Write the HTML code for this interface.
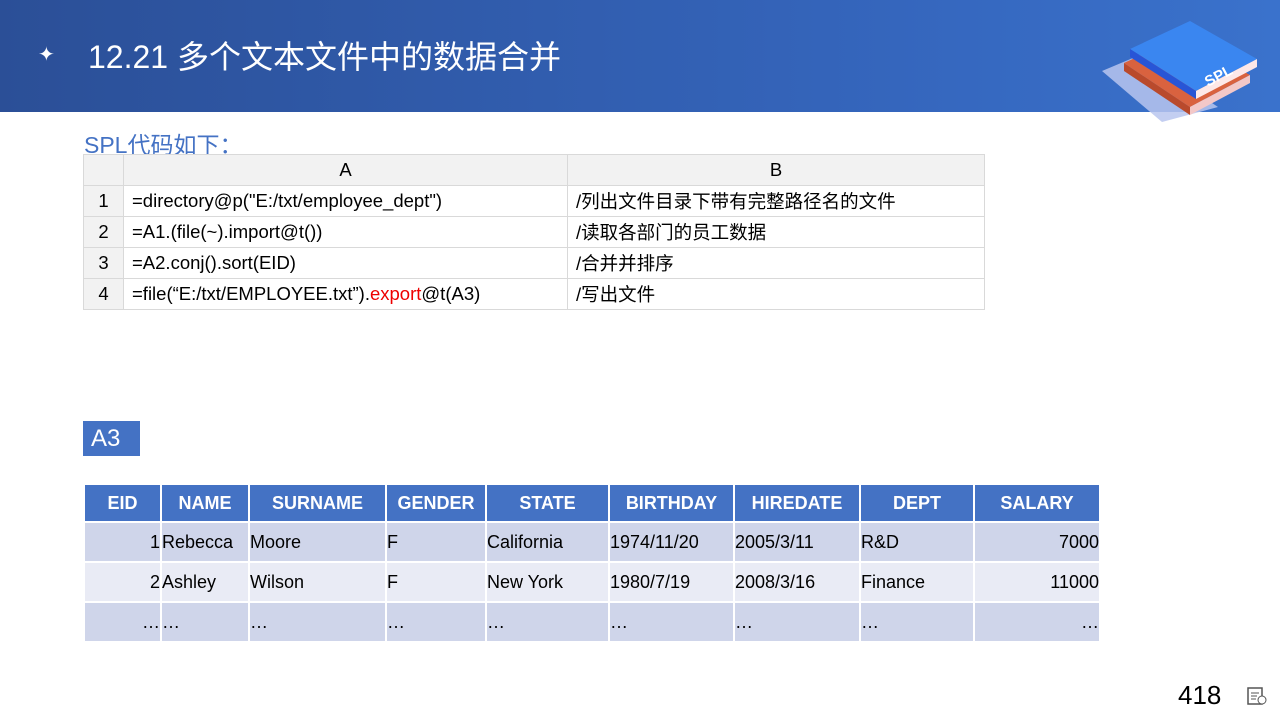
<!DOCTYPE html><html><head><meta charset="utf-8"><style>
body{margin:0;width:1280px;height:720px;position:relative;overflow:hidden;background:#fff;font-family:"Liberation Sans","Noto Sans CJK SC",sans-serif}
.hdr{position:absolute;left:0;top:0;width:1280px;height:112px;background:linear-gradient(90deg,#2b4f97,#3566bd 70%,#3a72cc)}
.title{position:absolute;left:88px;top:32px;color:#fff;font-size:32px}
.star{position:absolute;left:38px;top:42px;color:#fff;font-size:20px}
table{border-collapse:collapse;position:absolute}
.code{table-layout:fixed}
.code td{border:1px solid #d9d9d9;font-size:18.5px;height:30px;padding:0 0 0 8px;color:#000;white-space:nowrap}
.code tr:first-child td{background:#f2f2f2;text-align:center;padding:0}
.code td.n{background:#f2f2f2;text-align:center;padding:0}
.res{border-collapse:separate;border-spacing:2px}
.res td{height:38px;font-size:18px;padding:0;white-space:nowrap}
.res th{background:#4472c4;color:#fff;font-size:18px;height:36px;font-weight:bold;padding:0}
.o td{background:#cfd5ea}.e td{background:#e9ebf5}
.r{text-align:right}
</style></head><body>
<div class="hdr"></div>
<div class="star">✦</div>
<div class="title">12.21 多个文本文件中的数据合并</div>
<svg style="position:absolute;left:1100px;top:15px" width="160" height="110" viewBox="0 0 160 110">
<polygon points="2,56 40,40 118,92 62,107" fill="#b9c6ee" opacity="0.85"/>
<polygon points="24,48 80,22 150,60 90,92" fill="#d9623f"/>
<polygon points="24,48 24,56 90,100 90,92" fill="#b94a2c"/>
<polygon points="90,92 150,60 150,68 90,100" fill="#f3c8c8"/>
<polygon points="30,34 90,6 157,44 96,76" fill="#3a86f0"/>
<polygon points="30,34 30,42 96,84 96,76" fill="#2855d6"/>
<polygon points="96,76 157,44 157,52 96,84" fill="#fde8e8"/>
<text x="108" y="72" fill="#fff" font-size="15" font-weight="bold" transform="rotate(-28 108 72)">SPL</text>
</svg>
<div style="position:absolute;left:84px;top:126px;color:#4472c4;font-size:23px">SPL代码如下：</div>
<table class="code" style="left:83px;top:154px;width:901px">
<colgroup><col style="width:40px"><col style="width:444px"><col style="width:417px"></colgroup>
<tr><td></td><td>A</td><td>B</td></tr>
<tr><td class="n">1</td><td>=directory@p("E:/txt/employee_dept")</td><td>/列出文件目录下带有完整路径名的文件</td></tr>
<tr><td class="n">2</td><td>=A1.(file(~).import@t())</td><td>/读取各部门的员工数据</td></tr>
<tr><td class="n">3</td><td>=A2.conj().sort(EID)</td><td>/合并并排序</td></tr>
<tr><td class="n">4</td><td>=file(“E:/txt/EMPLOYEE.txt”).<span style="color:#e00">export</span>@t(A3)</td><td>/写出文件</td></tr>
</table>
<div style="position:absolute;left:83px;top:421px;width:57px;height:35px;background:#4472c4;color:#fff;font-size:24px;line-height:36px;padding-left:8px;box-sizing:border-box">A3</div>
<table class="res" style="left:83px;top:483px">
<tr><th style="width:75px">EID</th><th style="width:86px">NAME</th><th style="width:135px">SURNAME</th><th style="width:98px">GENDER</th><th style="width:121px">STATE</th><th style="width:123px">BIRTHDAY</th><th style="width:124px">HIREDATE</th><th style="width:112px">DEPT</th><th style="width:124px">SALARY</th></tr>
<tr class="o"><td class="r">1</td><td>Rebecca</td><td>Moore</td><td>F</td><td>California</td><td>1974/11/20</td><td>2005/3/11</td><td>R&amp;D</td><td class="r">7000</td></tr>
<tr class="e"><td class="r">2</td><td>Ashley</td><td>Wilson</td><td>F</td><td>New York</td><td>1980/7/19</td><td>2008/3/16</td><td>Finance</td><td class="r">11000</td></tr>
<tr class="o"><td class="r">…</td><td>…</td><td>…</td><td>…</td><td>…</td><td>…</td><td>…</td><td>…</td><td class="r">…</td></tr>
</table>
<div style="position:absolute;left:1178px;top:680px;font-size:26px;color:#000">418</div>
<svg style="position:absolute;left:1246px;top:686px" width="22" height="20" viewBox="0 0 22 20"><rect x="2" y="2" width="14" height="16" fill="none" stroke="#555" stroke-width="1.5"/><path d="M5 7h8M5 10h6M5 13h5" stroke="#555"/><circle cx="16" cy="14" r="4" fill="#fff" stroke="#555"/></svg>
</body></html>
